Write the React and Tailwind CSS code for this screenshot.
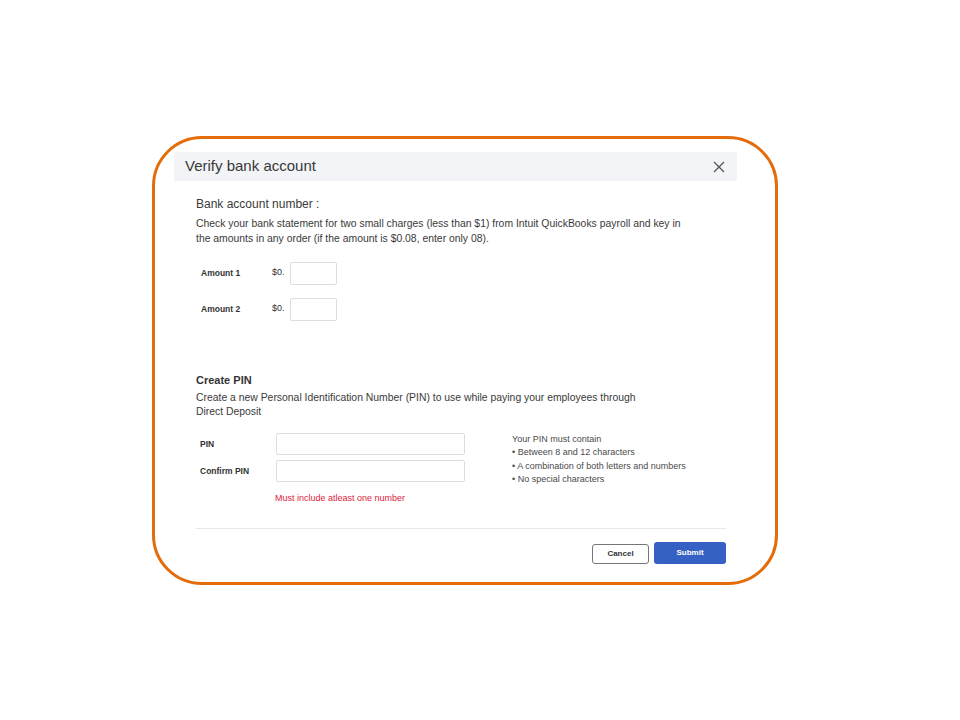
export default function App() {
  return (
    <div className="w-[960px] h-[720px] bg-white relative" style={{ fontFamily: '"Liberation Sans", Arial, sans-serif' }}>
      <div className="pt-[136px] pl-[152px]">
        <div className="w-[626px] h-[449px] border-[3px] border-[#e46c0a] rounded-[50px] pl-[19px] pt-[13px]">
          <div className="w-[563px] h-[29px] bg-[#f3f4f7] flex items-center justify-between pl-[11px] pr-[11px]">
            <span className="text-[15px] text-[#383838]">Verify bank account</span>
            <svg width="12" height="12" viewBox="0 0 12 12" className="mr-[1px]">
              <path d="M1 1L11 11M11 1L1 11" stroke="#555" strokeWidth="1.3" />
            </svg>
          </div>
          <div className="pl-[22px] pr-[11px]">
            <div className="mt-[16px] text-[12px] text-[#3a3a3a] leading-[15px]">Bank account number :</div>
            <div className="mt-[4px] text-[10.4px] text-[#3a3a3a] leading-[15px] w-[500px]">
              Check your bank statement for two small charges (less than $1) from Intuit QuickBooks payroll and key in the amounts in any order (if the amount is $0.08, enter only 08).
            </div>
            <div className="mt-[16px] flex items-center">
              <span className="w-[76px] pl-[5px] text-[8.5px] font-bold text-[#333]">Amount 1</span>
              <span className="w-[18px] text-[9px] text-[#333] -mt-[1px]">$0.</span>
              <div className="w-[47px] h-[23px] border border-[#ddd] rounded-[2px]"></div>
            </div>
            <div className="mt-[13px] flex items-center">
              <span className="w-[76px] pl-[5px] text-[8.5px] font-bold text-[#333]">Amount 2</span>
              <span className="w-[18px] text-[9px] text-[#333] -mt-[1px]">$0.</span>
              <div className="w-[47px] h-[23px] border border-[#ddd] rounded-[2px]"></div>
            </div>
            <div className="mt-[52px] text-[11px] font-bold text-[#333] leading-[14px]">Create PIN</div>
            <div className="mt-[4px] text-[10.4px] text-[#3a3a3a] leading-[14px] w-[460px]">
              Create a new Personal Identification Number (PIN) to use while paying your employees through Direct Deposit
            </div>
            <div className="mt-[14px] flex">
              <div className="flex flex-col">
                <div className="flex items-center">
                  <span className="w-[80px] pl-[4px] text-[8.5px] font-bold text-[#333]">PIN</span>
                  <div className="w-[189px] h-[22px] border border-[#ddd] rounded-[2px]"></div>
                </div>
                <div className="flex items-center mt-[5px]">
                  <span className="w-[80px] pl-[4px] text-[8.5px] font-bold text-[#333]">Confirm PIN</span>
                  <div className="w-[189px] h-[22px] border border-[#ddd] rounded-[2px]"></div>
                </div>
                <div className="ml-[79px] mt-[10px] text-[9px] text-[#e0213d]">Must include atleast one number</div>
              </div>
              <div className="ml-[47px] mt-[0px] text-[9px] text-[#4a4a4a] leading-[13.4px]">
                <div>Your PIN must contain</div>
                <div>• Between 8 and 12 characters</div>
                <div>• A combination of both letters and numbers</div>
                <div>• No special characters</div>
              </div>
            </div>
            <div className="mt-[22px] w-[530px] border-t border-[#e8e8e8]"></div>
            <div className="w-[530px] flex justify-end items-center mt-[13px] gap-[5px]">
              <button className="w-[57px] h-[20px] border border-[#777] rounded-[3px] text-[8px] font-bold text-[#333] bg-white mt-[2px]">Cancel</button>
              <button className="w-[72px] h-[22px] rounded-[3px] bg-[#3560c4] text-[8px] font-bold text-white">Submit</button>
            </div>
          </div>
        </div>
      </div>
    </div>
  );
}
